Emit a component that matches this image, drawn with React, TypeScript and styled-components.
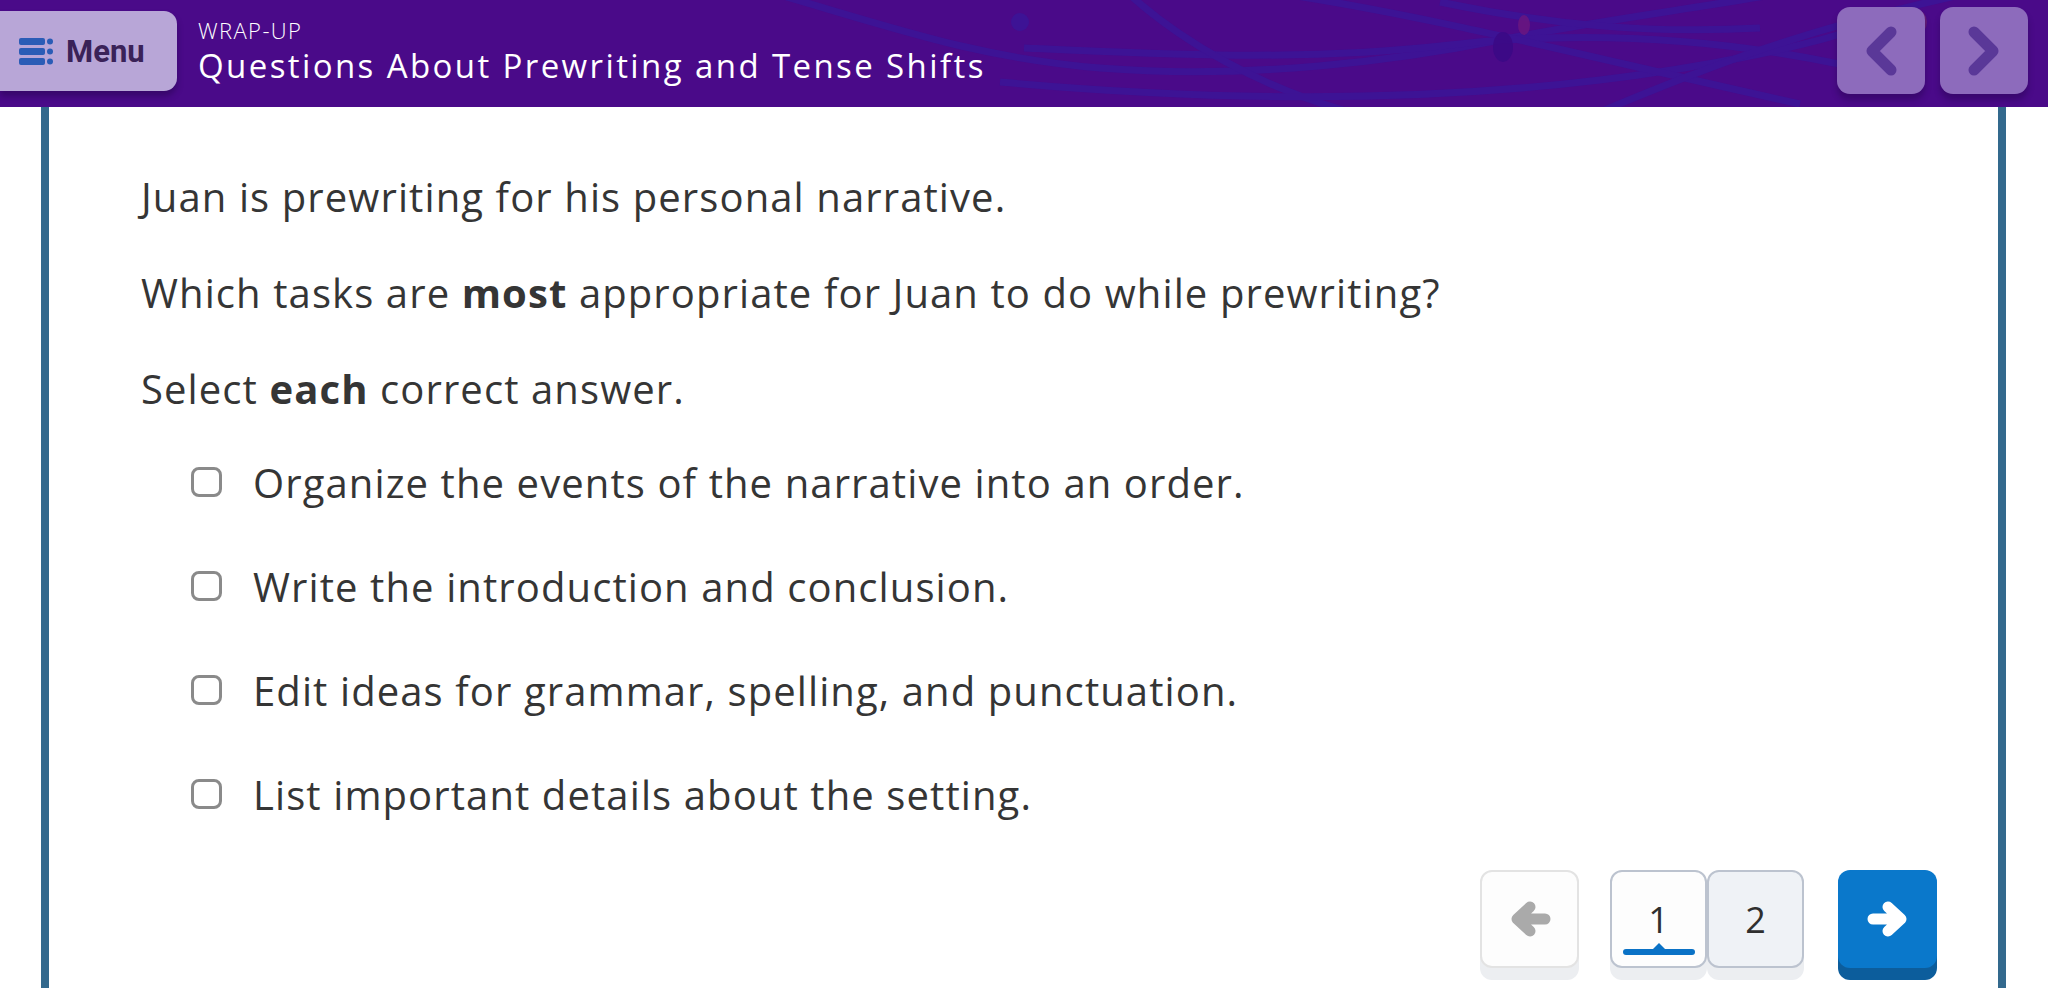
import * as React from 'react'
import styled, { createGlobalStyle } from 'styled-components'

const GlobalStyle = createGlobalStyle`
    html, body {
        margin: 0;
        padding: 0;
        background: #ffffff;
        overflow: hidden;
    }
    body {
        font-family: "Open Sans", "Noto Sans", sans-serif;
        color: #333;
    }
`

const FONT = `"Open Sans", "Noto Sans", sans-serif`

export const Shell = styled.div`
    display: flex;
    flex-direction: column;
    height: 100vh;
`

export const Header = styled.header`
    position: relative;
    display: flex;
    align-items: flex-start;
    height: 107px;
    flex-shrink: 0;
    background: #4a0a89;
    overflow: hidden;
`

const Decor = styled.svg`
    position: absolute;
    inset: 0;
    width: 100%;
    height: 100%;
    pointer-events: none;
`

export const MenuButton = styled.button`
    position: relative;
    display: flex;
    align-items: center;
    gap: 13px;
    margin-top: 11px;
    width: 177px;
    height: 80px;
    padding: 0 0 0 19px;
    border: none;
    border-radius: 0 13px 13px 0;
    background: #b8a6d7;
    box-shadow: 0 5px 6px rgba(20, 0, 50, 0.35);
    font-family: "Roboto", "Liberation Sans", sans-serif;
    font-weight: 700;
    font-size: 31px;
    color: #3a2258;
    cursor: pointer;
`

export const TitleBlock = styled.div`
    position: relative;
    display: flex;
    flex-direction: column;
    margin-left: 21px;
    margin-top: 17px;
    color: #ffffff;
    font-family: ${FONT};
`

export const Kicker = styled.span`
    font-size: 22px;
    font-weight: 300;
    line-height: 26px;
    letter-spacing: 1.4px;
`

export const Title = styled.h1`
    margin: 2px 0 0;
    font-size: 33px;
    font-weight: 400;
    line-height: 42px;
    letter-spacing: 2.4px;
`

export const NavGroup = styled.div`
    position: relative;
    display: flex;
    gap: 15px;
    margin: 7px 20px 0 auto;
`

export const NavButton = styled.button`
    display: flex;
    align-items: center;
    justify-content: center;
    width: 88px;
    height: 87px;
    padding: 0;
    border: none;
    border-radius: 13px;
    background: #8d6bbc;
    box-shadow: 0 6px 6px rgba(20, 0, 50, 0.3);
    cursor: pointer;
`

export const Panel = styled.main`
    flex: 1;
    margin: 0 42px 0 41px;
    border-left: 8px solid #33698d;
    border-right: 8px solid #33698d;
    background: #ffffff;
    padding: 60px 61px 0 92px;
    display: flex;
    flex-direction: column;
`

export const Prompt = styled.p`
    margin: 0 0 36px;
    font-family: ${FONT};
    font-size: 40px;
    line-height: 60px;
    letter-spacing: 1.1px;
    color: #353535;

    b {
        font-weight: 700;
    }
`

export const Options = styled.ul`
    list-style: none;
    margin: -3px 0 0;
    padding: 0 0 0 50px;
    display: flex;
    flex-direction: column;
    gap: 44px;
`

export const Option = styled.li`
    display: flex;
    align-items: center;
    gap: 31px;
    height: 60px;
    font-family: ${FONT};
    font-size: 40px;
    letter-spacing: 1.1px;
    color: #353535;
`

export const Box = styled.span`
    box-sizing: border-box;
    width: 31px;
    height: 30px;
    flex-shrink: 0;
    border: 3px solid #8a8a8a;
    border-radius: 8px;
    background: #fff;
`

export const Footer = styled.div`
    display: flex;
    justify-content: flex-end;
    align-items: flex-start;
    margin-top: 46px;
`

const Key = styled.button<{ $tone: 'muted' | 'page' | 'pageAlt' | 'primary' }>`
    position: relative;
    box-sizing: border-box;
    display: flex;
    align-items: center;
    justify-content: center;
    width: ${p => (p.$tone === 'page' || p.$tone === 'pageAlt' ? '97px' : '99px')};
    height: 98px;
    padding: 0;
    border-radius: 12px;
    font-family: ${FONT};
    font-size: 36px;
    color: #2f2f2f;
    cursor: pointer;
    border: ${p => (p.$tone === 'primary' ? 'none' : p.$tone === 'muted' ? '2px solid #e3e3e3' : '2px solid #bcc3cf')};
    background: ${p => (p.$tone === 'primary' ? '#0a78cb' : p.$tone === 'pageAlt' ? '#eff2f6' : '#fdfdfd')};
    box-shadow: ${p => (p.$tone === 'primary' ? '0 12px 0 #0c5d9c' : '0 12px 0 #eceef1')};
`

export const PageGroup = styled.div`
    display: flex;
    margin: 0 34px 0 31px;
`

const Marker = styled.span`
    position: absolute;
    left: 11px;
    right: 10px;
    bottom: 11px;
    height: 6px;
    border-radius: 3px;
    background: #0a72c6;

    &::after {
        content: '';
        position: absolute;
        left: 50%;
        top: -6px;
        margin-left: -7px;
        border-left: 7px solid transparent;
        border-right: 7px solid transparent;
        border-bottom: 7px solid #0a72c6;
    }
`

const Chevron = ({ dir }: { dir: 'left' | 'right' }) => (
    <svg width="36" height="50" viewBox="0 0 36 50">
        <path
            d={dir === 'left' ? 'M28 6 L9 25 L28 44' : 'M8 6 L27 25 L8 44'}
            fill="none"
            stroke="#5a3898"
            strokeWidth="11"
            strokeLinecap="round"
            strokeLinejoin="round"
        />
    </svg>
)

const Arrow = ({ dir, color }: { dir: 'left' | 'right'; color: string }) => (
    <svg width="42" height="36" viewBox="0 0 42 36" style={{ transform: dir === 'left' ? 'scaleX(-1)' : undefined }}>
        <path
            d="M6 18 H33 M21 6 L34 18 L21 30"
            fill="none"
            stroke={color}
            strokeWidth="11"
            strokeLinecap="round"
            strokeLinejoin="round"
        />
    </svg>
)

const MenuIcon = () => (
    <svg width="34" height="28" viewBox="0 0 34 28">
        <rect x="0" y="1" width="26" height="7" rx="2" fill="#2b5cb6" />
        <rect x="0" y="11" width="26" height="7" rx="2" fill="#2b5cb6" />
        <rect x="0" y="21" width="26" height="7" rx="2" fill="#2b5cb6" />
        <circle cx="31" cy="4.5" r="3" fill="#2b5cb6" />
        <circle cx="31" cy="14.5" r="3" fill="#2b5cb6" />
        <circle cx="31" cy="24.5" r="3" fill="#2b5cb6" />
    </svg>
)

const options = [
    'Organize the events of the narrative into an order.',
    'Write the introduction and conclusion.',
    'Edit ideas for grammar, spelling, and punctuation.',
    'List important details about the setting.',
]

export default function App() {
    return (
        <Shell>
            <GlobalStyle />
            <Header>
                <Decor viewBox="0 0 2048 107" preserveAspectRatio="none">
                    <g fill="none" stroke="#3c1497" strokeWidth="7" opacity="0.9">
                        <path d="M780 -5 C900 30 980 58 1100 68 C1250 80 1400 60 1500 40 C1600 20 1700 8 1800 -10" />
                        <path d="M1024 48 C1150 54 1300 62 1450 45 C1600 28 1750 40 1900 78" />
                        <path d="M1130 -5 C1180 40 1260 88 1350 112" />
                        <path d="M1000 82 C1200 100 1400 104 1600 80 C1700 68 1800 48 1860 28" />
                        <path d="M1290 -5 C1450 20 1600 60 1800 104" />
                        <path d="M1440 2 C1550 25 1650 34 1760 28" />
                        <path d="M1600 112 C1700 70 1800 30 1960 -5" />
                    </g>
                    <circle cx="1020" cy="22" r="9" fill="#3c1497" opacity="0.9" />
                    <ellipse cx="1524" cy="25" rx="6" ry="10" fill="#6a1680" opacity="0.85" />
                    <ellipse cx="1503" cy="47" rx="10" ry="15" fill="#3b0a86" opacity="0.95" />
                    <ellipse cx="1917" cy="22" rx="10" ry="12" fill="#7a2a70" opacity="0.6" />
                </Decor>
                <MenuButton>
                    <MenuIcon />
                    Menu
                </MenuButton>
                <TitleBlock>
                    <Kicker>WRAP-UP</Kicker>
                    <Title>Questions About Prewriting and Tense Shifts</Title>
                </TitleBlock>
                <NavGroup>
                    <NavButton aria-label="Previous">
                        <Chevron dir="left" />
                    </NavButton>
                    <NavButton aria-label="Next">
                        <Chevron dir="right" />
                    </NavButton>
                </NavGroup>
            </Header>
            <Panel>
                <Prompt>Juan is prewriting for his personal narrative.</Prompt>
                <Prompt>
                    Which tasks are <b>most</b> appropriate for Juan to do while prewriting?
                </Prompt>
                <Prompt>
                    Select <b>each</b> correct answer.
                </Prompt>
                <Options>
                    {options.map(text => (
                        <Option key={text}>
                            <Box />
                            {text}
                        </Option>
                    ))}
                </Options>
                <Footer>
                    <Key $tone="muted" aria-label="Back">
                        <Arrow dir="left" color="#aaaaaa" />
                    </Key>
                    <PageGroup>
                        <Key $tone="page">
                            1
                            <Marker />
                        </Key>
                        <Key $tone="pageAlt">2</Key>
                    </PageGroup>
                    <Key $tone="primary" aria-label="Forward">
                        <Arrow dir="right" color="#ffffff" />
                    </Key>
                </Footer>
            </Panel>
        </Shell>
    )
}
